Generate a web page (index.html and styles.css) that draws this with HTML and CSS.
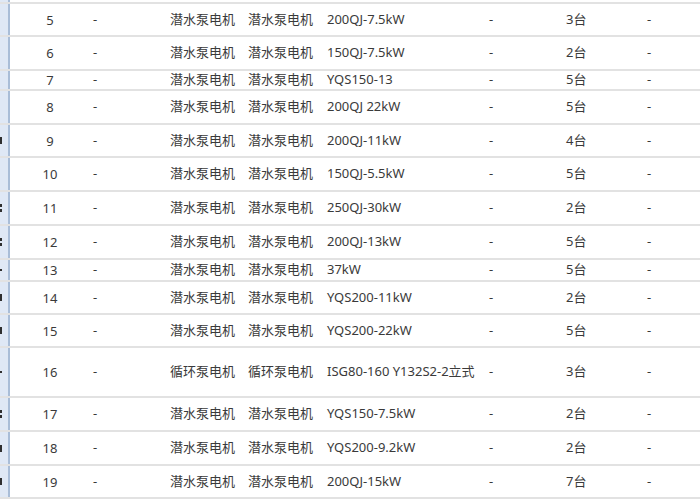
FILE: index.html
```html
<!DOCTYPE html>
<html lang="zh-CN">
<head>
<meta charset="utf-8">
<title>设备清单</title>
<link rel="stylesheet" href="styles.css">
</head>
<body>
<div class="sheet">
  <div class="lead"><div class="strip"></div><div class="lead-fill"></div></div>

  <div class="row h31"><div class="strip"></div><div class="num">5</div><div class="c">-</div><div class="c">潜水泵电机</div><div class="c">潜水泵电机</div><div class="c">200QJ-7.5kW</div><div class="c">-</div><div class="c">3台</div><div class="c">-</div></div>
  <div class="row h32"><div class="strip"></div><div class="num">6</div><div class="c">-</div><div class="c">潜水泵电机</div><div class="c">潜水泵电机</div><div class="c">150QJ-7.5kW</div><div class="c">-</div><div class="c">2台</div><div class="c">-</div></div>
  <div class="row h18"><div class="strip"></div><div class="num">7</div><div class="c">-</div><div class="c">潜水泵电机</div><div class="c">潜水泵电机</div><div class="c">YQS150-13</div><div class="c">-</div><div class="c">5台</div><div class="c">-</div></div>
  <div class="row h32"><div class="strip"></div><div class="num">8</div><div class="c">-</div><div class="c">潜水泵电机</div><div class="c">潜水泵电机</div><div class="c">200QJ 22kW</div><div class="c">-</div><div class="c">5台</div><div class="c">-</div></div>
  <div class="row h31"><div class="strip"><span class="mark"></span></div><div class="num">9</div><div class="c">-</div><div class="c">潜水泵电机</div><div class="c">潜水泵电机</div><div class="c">200QJ-11kW</div><div class="c">-</div><div class="c">4台</div><div class="c">-</div></div>
  <div class="row h32"><div class="strip"></div><div class="num">10</div><div class="c">-</div><div class="c">潜水泵电机</div><div class="c">潜水泵电机</div><div class="c">150QJ-5.5kW</div><div class="c">-</div><div class="c">5台</div><div class="c">-</div></div>
  <div class="row h32"><div class="strip"><span class="mark split"></span></div><div class="num">11</div><div class="c">-</div><div class="c">潜水泵电机</div><div class="c">潜水泵电机</div><div class="c">250QJ-30kW</div><div class="c">-</div><div class="c">2台</div><div class="c">-</div></div>
  <div class="row h32"><div class="strip"><span class="mark split"></span></div><div class="num">12</div><div class="c">-</div><div class="c">潜水泵电机</div><div class="c">潜水泵电机</div><div class="c">200QJ-13kW</div><div class="c">-</div><div class="c">5台</div><div class="c">-</div></div>
  <div class="row h20"><div class="strip"><span class="mark thin"></span></div><div class="num">13</div><div class="c">-</div><div class="c">潜水泵电机</div><div class="c">潜水泵电机</div><div class="c">37kW</div><div class="c">-</div><div class="c">5台</div><div class="c">-</div></div>
  <div class="row h31"><div class="strip"><span class="mark"></span></div><div class="num">14</div><div class="c">-</div><div class="c">潜水泵电机</div><div class="c">潜水泵电机</div><div class="c">YQS200-11kW</div><div class="c">-</div><div class="c">2台</div><div class="c">-</div></div>
  <div class="row h31"><div class="strip"><span class="mark"></span></div><div class="num">15</div><div class="c">-</div><div class="c">潜水泵电机</div><div class="c">潜水泵电机</div><div class="c">YQS200-22kW</div><div class="c">-</div><div class="c">5台</div><div class="c">-</div></div>
  <div class="row h48"><div class="strip"><span class="mark thin"></span></div><div class="num">16</div><div class="c">-</div><div class="c">循环泵电机</div><div class="c">循环泵电机</div><div class="c">ISG80-160 Y132S2-2立式</div><div class="c">-</div><div class="c">3台</div><div class="c">-</div></div>
  <div class="row h32"><div class="strip"><span class="mark split"></span></div><div class="num">17</div><div class="c">-</div><div class="c">潜水泵电机</div><div class="c">潜水泵电机</div><div class="c">YQS150-7.5kW</div><div class="c">-</div><div class="c">2台</div><div class="c">-</div></div>
  <div class="row h32"><div class="strip"><span class="mark"></span></div><div class="num">18</div><div class="c">-</div><div class="c">潜水泵电机</div><div class="c">潜水泵电机</div><div class="c">YQS200-9.2kW</div><div class="c">-</div><div class="c">2台</div><div class="c">-</div></div>
  <div class="row h31"><div class="strip"><span class="mark"></span></div><div class="num">19</div><div class="c">-</div><div class="c">潜水泵电机</div><div class="c">潜水泵电机</div><div class="c">200QJ-15kW</div><div class="c">-</div><div class="c">7台</div><div class="c">-</div></div>
</div>
</body>
</html>
```

FILE: styles.css
```css
html, body {
  margin: 0;
  padding: 0;
  background: #ffffff;
  overflow: hidden;
}

.sheet {
  width: 700px;
  height: 500px;
  overflow: hidden;
  font-family: "Noto Sans", "Noto Sans CJK SC", sans-serif;
  font-size: 13px;
  color: #3a3a3a;
}

.lead {
  display: grid;
  grid-template-columns: 10px 1fr;
  height: 2px;
  border-bottom: 2px solid #e2e2e2;
}

.lead-fill {
  background: #ffffff;
}

.row {
  display: grid;
  grid-template-columns: 10px 80px 77px 78px 79px 162px 77px 81px 1fr;
  border-bottom: 2px solid #e2e2e2;
  align-items: center;
}

.h18 { height: 18px; }
.h20 { height: 20px; }
.h31 { height: 31px; }
.h32 { height: 32px; }
.h48 { height: 48px; }

.strip {
  align-self: stretch;
  background: #dfe8f5;
  border-right: 2px solid #a9bdd7;
  display: flex;
  align-items: center;
}

.mark {
  width: 2px;
  height: 7px;
  background: #2f2f2f;
}

.mark.split {
  height: 8px;
  background: linear-gradient(#2f2f2f 0 3px, transparent 3px 5px, #2f2f2f 5px 8px);
}

.mark.thin {
  height: 2px;
}

.num {
  text-align: center;
  white-space: nowrap;
}

.c {
  padding-left: 3px;
  white-space: nowrap;
  line-height: 1.2;
}
```
